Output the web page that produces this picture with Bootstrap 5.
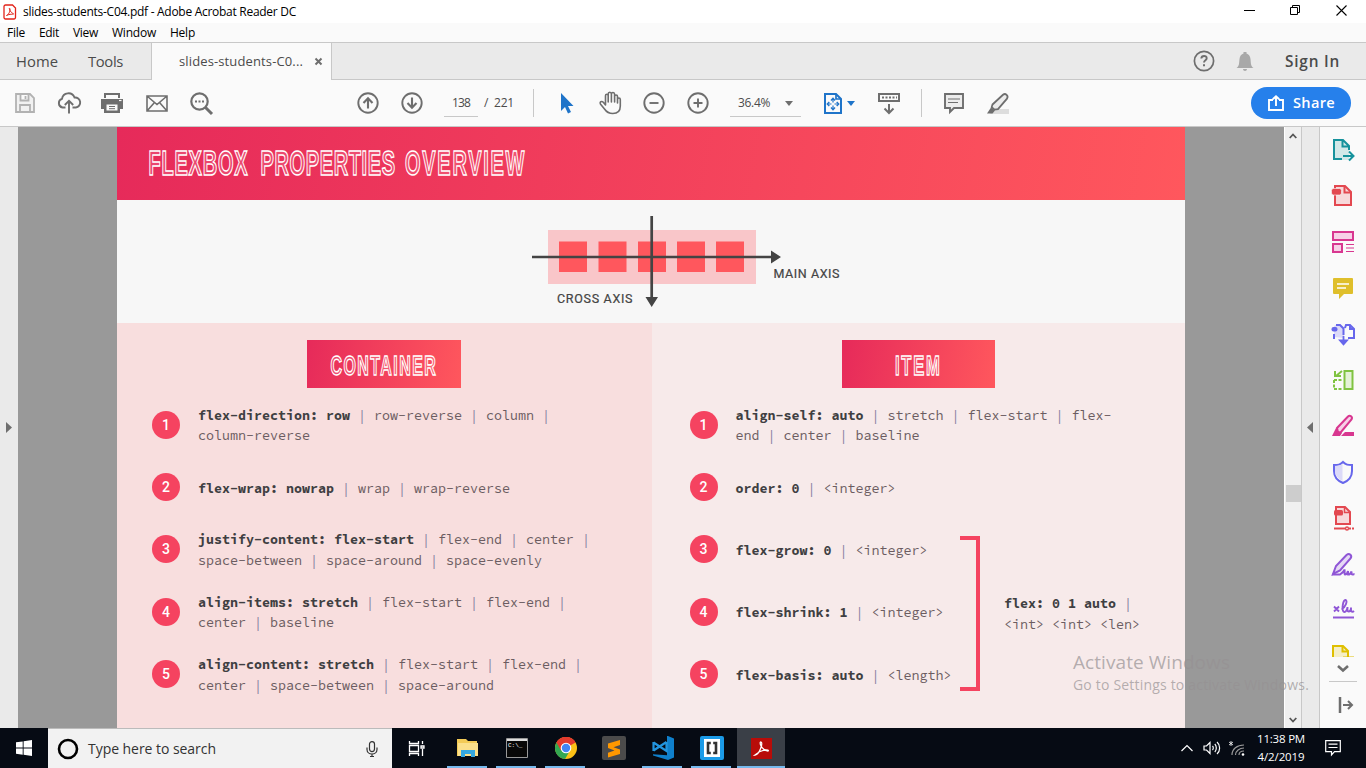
<!DOCTYPE html>
<html lang="en">
<head>
<meta charset="utf-8">
<title>slides-students-C04.pdf - Adobe Acrobat Reader DC</title>
<link href="https://cdn.jsdelivr.net/npm/bootstrap@5.3.0/dist/css/bootstrap.min.css" rel="stylesheet">
<style>
body{width:1366px;height:768px;overflow:hidden;font:12px/1.2 "Open Sans","Noto Sans",sans-serif;color:#000;background:#fafafa}
svg{display:block;flex:none;overflow:visible}
[data-w]{display:inline-block;white-space:nowrap;flex:none}
.titlebar{height:23px;background:#fff;padding-top:1px}
.titlebar .wm{gap:35px;padding-right:19px;margin-top:-3px}
.menubar{height:20px;border-bottom:1px solid #c8c8c8;font-size:12px;padding-top:1px}
.tabbar{height:37px;background:#eaeaea;border-bottom:1px solid #c8c8c8;font-size:14.8px;color:#4b4b4b}
.tabbar [data-w]{padding-top:2px}
.doc-tab{width:181px;height:37px;background:#fafafa;border:solid #c8c8c8;border-width:0 1px;font-size:13px}
.toolbar{height:47px;border-bottom:1px solid #c8c8c8;color:#6e6e6e;padding-left:3px}
.cell{width:44px;flex:none;display:flex;justify-content:center;align-items:center}
.vline{width:1px;height:28px;background:#c8c8c8;flex:none}
.field{height:27px;border-bottom:1px solid #c8c8c8;color:#4b4b4b;flex:none}
.share{width:100px;height:32px;border-radius:16px;background:#2680eb;font-size:14.6px;font-weight:600;color:#fff;border:0;padding:0 0 0 17px}
.work{height:601px}
.strip{background:#eaeaea;flex:none}
.canvas{background:#999;width:1266px}
.slide{width:1068px}
.slide-head{height:73px;background:linear-gradient(100deg,#e62a5a,#ff575d)}
.inline-caps{fill:#fff;fill-opacity:.12;stroke:#fff;stroke-width:1.5;font-family:"Liberation Sans",sans-serif;font-weight:700}
.axes{height:123px;background:#f7f7f7}
.pane{padding-top:17px}
.pane.one{width:535px;background:#f8dede}
.pane.two{width:533px;background:#f7eaea}
.pill{width:154px;height:48px;background:linear-gradient(100deg,#e62a5a,#ff575d)}
.prop{height:62.4px;display:flex;align-items:center}
.num{width:28px;height:28px;border-radius:50%;background:#f54360;color:#fff;font:500 14px/29px Roboto,sans-serif;text-align:center;flex:none;margin:-1px 18px 0 0}
.code{font:13.34px/20.6px "Source Code Pro","Liberation Mono",monospace;color:#6b5c61;white-space:nowrap;padding-top:2px}
.code.solo{padding-top:4px}
.code b{color:#3f3f42;font-weight:700}
.pane i{color:#8d87a3;font-style:normal}
.brace{width:20px;height:155px;border:4px solid #f54360;border-left:0}
.scroller{width:17px;background:#f0f0f0;border-left:1px solid #fff;flex:none}
.tools{background:#fafafa;width:46px;border-left:1px solid #c8c8c8}
.tools .list{height:530px;overflow:hidden}
.tools .list svg{height:46px;width:46px}
.mark-os{left:1073px;top:651px;color:rgba(150,145,147,.7);z-index:5}
.taskbar{height:40px;background:#060b14;color:#fff}
.search{width:344px;height:40px;background:#f2f2f2;color:#333;border-top:1px solid #bbb;font-size:14px}
.app{width:49px;height:40px;display:flex;justify-content:center;align-items:center;flex:none;position:relative}
.app.run::after{content:"";position:absolute;bottom:0;left:4px;width:40px;height:2px;background:#76b9ed}
.app.on{background:#3a3f47;width:48px}
.app.on::after{left:0;width:48px}
</style>
</head>
<body>
<header>
<div class="titlebar d-flex align-items-center">
<svg width="14" height="16" style="margin-left:3px" viewBox="0 0 14 16"><path d="M2.500 1h7L12.500 4v9.500a1.500 1.500 0 0 1-1.500 1.500H2.500A1.500 1.500 0 0 1 1 13.500v-11A1.500 1.500 0 0 1 2.500 1z" fill="#fff" stroke="#e2231a" stroke-width="1.300"/><path d="M3.500 11.500c2.500-1 4.300-5.500 3.300-7s-.8 3 3.700 5.300c.8.900-3.500-.3-7 1.700z" fill="none" stroke="#e2231a"/></svg>
<span data-w="273" style="margin-left:6px">slides-students-C04.pdf - Adobe Acrobat Reader DC</span>
<div class="wm d-flex align-items-center ms-auto">
<svg width="11" height="11" stroke="#000"><path d="M0 5.500h11"/></svg>
<svg width="11" height="11" fill="none" stroke="#000"><path d="M.5 2.500h7v7h-7zM2.500 2V.5h7v7H8"/></svg>
<svg width="11" height="11" stroke="#000" stroke-width="1.100"><path d="M.5.5l10 10M10.500.5l-10 10"/></svg>
</div>
</div>
<nav class="menubar d-flex align-items-center" style="padding-left:7px"><span data-w="18">File</span><span data-w="20" style="margin-left:14px">Edit</span><span data-w="25" style="margin-left:14px">View</span><span data-w="44" style="margin-left:14px">Window</span><span data-w="25" style="margin-left:14px">Help</span></nav>
<div class="tabbar d-flex align-items-center">
<span data-w="42" style="margin-left:16px">Home</span><span data-w="35" style="margin-left:30px">Tools</span>
<div class="doc-tab d-flex align-items-center" style="margin-left:28px"><span data-w="124" style="margin-left:27px">slides-students-C0...</span><svg width="7" height="7" style="margin-left:12px" stroke="#6e6e6e" stroke-width="2"><path d="M.5.5l6 6M6.500.5l-6 6"/></svg></div>
<div class="d-flex align-items-center ms-auto" style="padding-right:26px">
<svg width="22" height="22" viewBox="0 0 22 22" fill="none" stroke="#6e6e6e"><circle cx="11" cy="11" r="9.600" stroke-width="1.700"/><path d="M8.300 8.500c.3-3.500 5.500-3.200 5.400-.2 0 2-2.700 2-2.700 4.300" stroke-width="1.900"/><path d="M11 14.200v2" stroke-width="2"/></svg>
<svg width="18" height="20" style="margin-left:21px" viewBox="0 0 18 20" fill="#a8a8a8"><path d="M.5 17c3-2 2.500-5 3-9 .3-3 2-5 4-5.500V1h3v1.500c2 .5 3.700 2.500 4 5.500.5 4 0 7 3 9zM7 18h4c0 2.500-4 2.500-4 0z"/></svg>
<span data-w="55" style="margin-left:31px;font-weight:600;font-size:15.4px">Sign In</span>
</div>
</div>
<div class="toolbar d-flex align-items-center">
<div class="cell"><svg width="20" height="20" fill="#f1f1f1" stroke="#b2b2b2" stroke-width="1.800"><path d="M1 1h14l4 4v14H1zM5.500 1v6.500h8V1M5 19v-7h10v7"/><path d="M10.500 3v3"/></svg></div>
<div class="cell"><svg width="24" height="22" viewBox="0 0 24 22" fill="none" stroke="#6e6e6e" stroke-width="1.900"><path d="M8.500 15.500H5.500A4.500 4.500 0 0 1 5 6.800 6.500 6.500 0 0 1 17.500 5.500a5 5 0 0 1 1.300 10h-3.300M12 21.500V9M7.800 13L12 8.800 16.200 13"/></svg></div>
<div class="cell" style="margin-left:-1px;margin-right:1px"><svg width="22" height="20" viewBox="0 0 22 20"><path fill="#6e6e6e" d="M3 0h16v5H3zM0 6h22v10h-3v4H3v-4H0z"/><path d="M5.500 11.500h11v6h-11z" fill="#fafafa"/><path d="M5 2h12v3H5z" fill="#fafafa"/><path d="M8 13.500h6M8 15.700h6" stroke="#6e6e6e"/><path d="M18 7.500h2.500" stroke="#fafafa" stroke-width="1.200"/></svg></div>
<div class="cell"><svg width="22" height="17" fill="none" stroke="#6e6e6e" stroke-width="1.600"><path d="M1 1h20v15H1zM1 1l10 8.500L21 1M1 16l7.500-8.500M21 16l-7.500-8.500"/></svg></div>
<div class="cell"><svg width="23" height="23" fill="none" stroke="#6e6e6e"><circle cx="9.500" cy="9.500" r="8.200" stroke-width="2.200"/><path d="M15.500 15.500l6.500 6.500" stroke-width="3"/><path d="M5 9.500h9" stroke-width="2" stroke-dasharray="2 1.500"/></svg></div>
<div class="cell" style="margin-left:123px"><svg width="22" height="22" fill="none" stroke="#6e6e6e" stroke-width="1.900"><circle cx="11" cy="11" r="9.700"/><path d="M11 16.500V6.500M6.500 11L11 6.300l4.500 4.700" stroke-width="2.100"/></svg></div>
<div class="cell"><svg width="22" height="22" fill="none" stroke="#6e6e6e" stroke-width="1.900"><circle cx="11" cy="11" r="9.700"/><path d="M11 5.500v10M6.500 11l4.500 4.700 4.500-4.700" stroke-width="2.100"/></svg></div>
<div class="field d-flex align-items-center" style="margin-left:10px;width:34px;padding:1px 0 0 8px"><span data-w="18">138</span></div>
<span data-w="30" style="margin-left:6px;color:#4b4b4b;padding-top:1px">/&nbsp; 221</span>
<div class="vline" style="margin-left:19px"></div>
<div class="cell" style="margin-left:11px"><svg width="14" height="21"><path d="M1 0v18l4-4 3 6.500 3-1.500-3-6h5.500z" fill="#1f74c9"/></svg></div>
<div class="cell" style="margin-left:-1px"><svg width="23" height="24" viewBox="0 0 23 24" fill="none" stroke="#6e6e6e" stroke-width="1.600" stroke-linecap="round" stroke-linejoin="round"><path d="M6.500 14V4.800c0-2 2.700-2 2.700 0V11 3c0-2.300 3.200-2.300 3.200 0v8V3c0-2.200 3.200-2 3.200.2V11 5.500c0-2 2.900-2 2.900 0V12 8.500c0-2 2.800-2 2.800 0V15c0 5-3 7.500-7.500 7.500S7.500 21 5.500 18L1.600 13.200c-1.500-2.300 1.100-3.500 2.700-1.900z"/></svg></div>
<div class="cell"><svg width="22" height="22" fill="none" stroke="#6e6e6e" stroke-width="1.900"><circle cx="11" cy="11" r="9.700"/><path d="M6.500 11h9"/></svg></div>
<div class="cell"><svg width="22" height="22" fill="none" stroke="#6e6e6e" stroke-width="1.900"><circle cx="11" cy="11" r="9.700"/><path d="M6.500 11h9M11 6.500v9"/></svg></div>
<div class="field d-flex align-items-center" style="margin-left:10px;width:71px;padding:1px 0 0 8px"><span data-w="32">36.4%</span><svg width="8" height="5" style="margin-left:15px"><path d="M0 0h8L4 5z" fill="#6e6e6e"/></svg></div>
<svg width="18" height="21" style="margin-left:23px" fill="none" stroke="#1f74c9"><path d="M1 1h11l5 5v14H1z" stroke-width="2"/><path d="M12 1v5h5" stroke-width="1.700"/><path d="M9 6v3.500M9 12.500V16M4 11h3.500M10.500 11H14" stroke-width="1.200"/><path d="M7 7.500L9 5.300l2 2.200M7 14.500l2 2.200 2-2.200M5.300 9L3.300 11l2 2M12.700 9l2 2-2 2" stroke-width="1.400"/></svg>
<svg width="8" height="5" style="margin-left:5px"><path d="M0 0h8L4 5z" fill="#1f74c9"/></svg>
<svg width="22" height="21" style="margin-left:23px" fill="none" stroke="#6e6e6e" stroke-width="2"><path d="M1 1h20v7H1z"/><path d="M4 4.500h15" stroke-width="1.800" stroke-dasharray="2 1.500"/><path d="M11 11v9M6.500 15.500L11 20l4.500-4.500"/></svg>
<div class="vline" style="margin-left:21px"></div>
<div class="cell" style="margin-left:10px"><svg width="20" height="21" fill="#ececec" stroke="#6e6e6e" stroke-width="1.900"><path d="M1 1h18v14h-9l-4 4v-4H1z"/><path d="M4 6h12M4 9.500h10" stroke-width="1.200"/></svg></div>
<div class="cell" style="margin-left:-1px"><svg width="23" height="21"><path d="M7 16h16v5H4z" fill="#ddd"/><path d="M6.500 11.500L17 1.800c2.500-2 5.800.8 4 3.800l-9 10.500-3.500.5-2.800-2.500z" fill="#ececec" stroke="#6e6e6e" stroke-width="1.800"/><path d="M1 20.500l4-6 4 3-2.500 3z" fill="#6e6e6e"/></svg></div>
<button class="share d-flex align-items-center ms-auto" style="margin-right:15px"><svg width="16" height="16" fill="none" stroke="#fff" stroke-width="1.900"><path d="M5 5H1v10h14V5h-4M8 11V1.500M4.800 4.300L8 1.200l3.200 3.100"/></svg><span data-w="42" style="margin-left:9px">Share</span></button>
</div>
</header>

<main class="work d-flex">
<div class="strip d-flex align-items-center" style="width:18px"><svg width="6" height="11" style="margin-left:6px"><path d="M0 0v11l6-5.500z" fill="#6e6e6e"/></svg></div>
<div class="canvas d-flex justify-content-center">
<div class="slide d-flex flex-column">
<div class="slide-head">
<svg width="1068" height="73" viewBox="117 127 1068 73" class="inline-caps" font-size="34.500"><text transform="translate(148.500 174.500) scale(.58 1)" textLength="171">FLEXBOX</text><text transform="translate(260.500 174.500) scale(.58 1)" textLength="232">PROPERTIES</text><text transform="translate(405 174.500) scale(.58 1)" textLength="206">OVERVIEW</text></svg>
</div>
<div class="axes">
<svg width="1068" height="123" viewBox="117 200 1068 123"><path fill="#f9c6c9" d="M548 230h208v54H548z"/><path fill="#ff575d" d="M559 241.500h28v30.500h-28zM598.500 241.500h28v30.500h-28zM638 241.500h28v30.500h-28zM677 241.500h28v30.500h-28zM716 241.500h28v30.500h-28z"/><path d="M532 257h240M651.700 216v82" stroke="#444" stroke-width="2.700"/><path d="M771 250.500v13l10-6.500zM645.500 297h12.500l-6.300 10z" fill="#444"/><g font-family="Roboto" font-size="12.500" fill="#444" stroke="#444" stroke-width=".2"><text x="773.500" y="278" textLength="66">MAIN AXIS</text><text x="557" y="303" textLength="75.500">CROSS AXIS</text></g></svg>
</div>
<div class="d-flex flex-grow-1">
<section class="pane one">
<div class="pill" style="margin-left:190px"><svg width="154" height="48" class="inline-caps" font-size="28.500"><text transform="translate(23.500 35) scale(.56 1)" textLength="188">CONTAINER</text></svg></div>
<div style="padding:6px 0 0 35px">
<div class="prop"><span class="num">1</span><div class="code"><b>flex-direction: row</b> <i>|</i> row-reverse <i>|</i> column <i>|</i><br>column-reverse</div></div>
<div class="prop"><span class="num">2</span><div class="code solo"><b>flex-wrap: nowrap</b> <i>|</i> wrap <i>|</i> wrap-reverse</div></div>
<div class="prop"><span class="num">3</span><div class="code"><b>justify-content: flex-start</b> <i>|</i> flex-end <i>|</i> center <i>|</i><br>space-between <i>|</i> space-around <i>|</i> space-evenly</div></div>
<div class="prop"><span class="num">4</span><div class="code"><b>align-items: stretch</b> <i>|</i> flex-start <i>|</i> flex-end <i>|</i><br>center <i>|</i> baseline</div></div>
<div class="prop"><span class="num">5</span><div class="code"><b>align-content: stretch</b> <i>|</i> flex-start <i>|</i> flex-end <i>|</i><br>center <i>|</i> space-between <i>|</i> space-around</div></div>
</div>
</section>
<section class="pane two">
<div class="pill" style="margin-left:190px;width:153px"><svg width="153" height="48" class="inline-caps" font-size="28.500"><text transform="translate(53 35) scale(.58 1)" textLength="77">ITEM</text></svg></div>
<div style="padding:6px 0 0 37.5px">
<div class="prop"><span class="num">1</span><div class="code"><b>align-self: auto</b> <i>|</i> stretch <i>|</i> flex-start <i>|</i> flex-<br>end <i>|</i> center <i>|</i> baseline</div></div>
<div class="prop"><span class="num">2</span><div class="code solo"><b>order: 0</b> <i>|</i> &lt;integer&gt;</div></div>
<div class="d-flex align-items-center">
<div style="width:270px">
<div class="prop"><span class="num">3</span><div class="code"><b>flex-grow: 0</b> <i>|</i> &lt;integer&gt;</div></div>
<div class="prop"><span class="num">4</span><div class="code"><b>flex-shrink: 1</b> <i>|</i> &lt;integer&gt;</div></div>
<div class="prop"><span class="num">5</span><div class="code solo"><b>flex-basis: auto</b> <i>|</i> &lt;length&gt;</div></div>
</div>
<div class="brace" style="margin-top:2.600px"></div>
<div class="code" style="margin-left:24.5px;padding-top:5px"><b>flex: 0 1 auto</b> <i>|</i><br>&lt;int&gt; &lt;int&gt; &lt;len&gt;</div>
</div>
</div>
</section>
</div>
</div>
</div>
<div class="scroller d-flex flex-column align-items-center"><svg width="8" height="6" style="margin-top:6px" fill="none" stroke="#555" stroke-width="1.800"><path d="M.7 5L4 1.500 7.300 5"/></svg><div style="width:15px;height:17px;background:#cdcdcd;margin-top:346px"></div><svg width="8" height="6" style="margin:auto 0 5px" fill="none" stroke="#555" stroke-width="1.800"><path d="M.7 1L4 4.500 7.300 1"/></svg></div>
<div class="strip d-flex align-items-center justify-content-center" style="width:18px;border-left:1px solid #c8c8c8"><svg width="6" height="11" style="margin-right:1px"><path d="M6 0v11L0 5.500z" fill="#6e6e6e"/></svg></div>
<aside class="tools flex-grow-1">
<div class="list d-flex flex-column">
<svg viewBox="0 0 46 46"><path d="M14 13h9l6 6v14H14z" fill="#d2e8e8"/><path d="M22 32H14V13h9l6 6v4M22.500 13v6.500H29" fill="none" stroke="#16929c" stroke-width="2"/><path d="M23 29h10M29 24.500l4.500 4.500-4.500 4.500" stroke="#16929c" fill="none" stroke-width="2"/></svg>
<svg viewBox="0 0 46 46"><path d="M15 32V13h10l6 6v13z" fill="#f7d8da" stroke="#e34850" stroke-width="2"/><path d="M24.500 13v6.500H31" stroke="#e34850" fill="none" stroke-width="2"/><rect x="11.500" y="15.500" width="10" height="6.500" rx="2" fill="#e34850" stroke="#fafafa" stroke-width=".6"/></svg>
<svg viewBox="0 0 46 46" fill="#f7d0e7" stroke="#d83790" stroke-width="2"><path d="M13 13h20v8H13zM13 25h9v8h-9z"/><path d="M26 25.500h8M26 29h8M26 32.500h8" stroke-width="1.200"/></svg>
<svg viewBox="0 0 46 46"><path d="M14 13h18q1 0 1 1v14q0 1-1 1h-8l-5 5v-5h-5q-1 0-1-1V14q0-1 1-1z" fill="#dfbf2b"/><path d="M17 19h12M17 23h9" stroke="#fff" stroke-width="1.700"/></svg>
<svg viewBox="0 0 46 46"><path d="M14 26V15l2-1h5l3 4v9z" fill="#dcdaf8"/><path d="M15 27h-1v-4M16 14h4l3.500 3.500V24M25 17l1-3h4l4 4v9h-6M30 14v4h4" stroke="#6767ec" stroke-width="2" fill="none"/><rect x="11.500" y="16" width="6" height="4.500" rx="2" fill="#6767ec"/><path d="M23.500 25v5M20 29.500h7l-3.500 4z" fill="#6767ec" stroke="#6767ec" stroke-width="1.800"/></svg>
<svg viewBox="0 0 46 46" fill="none" stroke="#80c342" stroke-width="2"><path d="M24.500 14h8v18h-8z" fill="#e4f2d8"/><path d="M14 23v9h9M14 23h9" stroke-dasharray="3 1.500"/><path d="M22 14l-6 5M15 14v5h6"/></svg>
<svg viewBox="0 0 46 46"><path d="M12 33l4-8 6 5-2 3z" fill="#d83790"/><path d="M17 25L28 13.500c2-2 5 .5 3.500 3L21 29l-3 .5z" fill="#f7d0e7" stroke="#d83790" stroke-width="2"/><path d="M21 33l4-4h9v4z" fill="#d83790"/></svg>
<svg viewBox="0 0 46 46"><path d="M23 13c3 3 5 3 9 3v6c0 6-4 10-9 12-5-2-9-6-9-12v-6c4 0 6 0 9-3z" fill="#fafafa" stroke="#6767ec" stroke-width="2"/><path d="M22.500 15v17c-4-2-7.500-6-7.500-10v-5c3 0 5-.5 7.500-2z" fill="#dcdaf8"/></svg>
<svg viewBox="0 0 46 46"><path d="M16 29V12h9l5 5v12z" fill="#f7d8da" stroke="#e34850" stroke-width="2"/><path d="M24.500 12v5.500H30" stroke="#e34850" fill="none" stroke-width="1.500"/><rect x="14" y="15" width="9" height="5.500" rx="1.500" fill="#e34850"/><path d="M14 33.500h11M29 33.500h2M32 33.500h2" stroke="#e34850" stroke-width="1.800"/><circle cx="27" cy="33.500" r="1.500" fill="none" stroke="#e34850" stroke-width="1.400"/></svg>
<svg viewBox="0 0 46 46" fill="none" stroke="#8f56d6" stroke-width="2"><path d="M13 33l3-8 10.500-11c3-2.500 6 .5 4 3.500L20 29.500z" fill="#e6d9f5"/><path d="M12 33.500h8c3-2 4-3 4.500-5 .5 3-.5 4.500.5 5 2 0 2.500-1.500 3-3.500v3.500c1.500.5 2.500-1 3.500-3v2.500c1 1 2 0 3 .5"/></svg>
<svg viewBox="0 0 46 46" fill="none" stroke="#8f56d6" stroke-width="1.900"><path d="M14 19.500l5 5M19 19.500l-5 5M21.500 22.500c4-2 6.500-9 4-9.500s-4 9.500-2 11.500 4-2.500 4-4.500c0 2-.5 4.500 1 4.500 1.500 0 2.500-2 2.500-4v3c0 1.500 2 1.500 3 .5M13 30.500h21"/></svg>
<svg viewBox="0 0 46 46" fill="none" stroke="#dfbf00" stroke-width="2"><path d="M13 34V13h10l5 5v7h-5l-3 3v3z" fill="#f5efc6"/><path d="M22.500 13v5.500H28M23 24.500h11"/></svg>
</div>
<svg width="46" height="8" style="margin-top:8px" fill="none" stroke="#6e6e6e" stroke-width="2.600"><path d="M18 1l5 4.500L28 1"/></svg>
<div style="width:28px;height:1px;background:#c8c8c8;margin:8px 0 0 9px"></div>
<svg width="46" height="16" style="margin-top:15px" fill="none" stroke="#6e6e6e" stroke-width="2"><path d="M20 0v16" stroke-width="2.500"/><path d="M23 8h9M28 4l4 4-4 4"/></svg>
</aside>
</main>

<footer class="taskbar d-flex align-items-center">
<svg width="16" height="16" style="margin:0 16px" fill="#fff"><path d="M0 2.300L6.700 1.400v6.200H0zM7.600 1.300L16 0v7.600H7.600zM0 8.500h6.700v6.200L0 13.800zM7.600 8.500H16V16l-8.400-1.200z"/></svg>
<div class="search d-flex align-items-center"><svg width="22" height="22" style="margin-left:9px" fill="none" stroke="#000" stroke-width="2.600"><circle cx="11" cy="11" r="9"/></svg><span data-w="128" style="margin-left:9px;padding-top:1px">Type here to search</span><svg width="12" height="16" style="margin-left:150px" fill="none" stroke="#333" stroke-width="1.200"><rect x="3.500" y=".6" width="5" height="10" rx="2.500"/><path d="M1 6.500v2c0 6 10 6 10 0v-2M6 13v3M4 15.500h4"/></svg></div>
<div class="app"><svg width="17" height="15" fill="none" stroke="#fff" stroke-width="1.300"><path d="M1.500 0v2.500h9V0M1.500 15v-2.500h9V15M1.500 4.500h9v6h-9zM14.500 0v3M14.500 8v7M13 5h3v2h-3z"/></svg></div>
<div class="app run" style="margin-left:2px"><svg width="22" height="20"><path d="M0 1h9l2 2h9v15H0z" fill="#f3cb57"/><path d="M1 5h20v13H1z" fill="#fbe08b"/><path d="M4 19v-7h14v7h-4v-3H8v3z" fill="#35a8e0"/></svg></div>
<div class="app run"><svg width="22" height="20"><path d="M.5.5h21v19H.5z" fill="#080808" stroke="#999"/><path d="M1 1h20v2H1z" fill="#ddd"/><text x="2" y="9" font-size="6" font-family="Liberation Mono" fill="#fff">C:\_</text></svg></div>
<div class="app run" style="margin-right:-1px"><svg width="22" height="22" viewBox="0 0 24 24"><circle cx="12" cy="12" r="12" fill="#fbc116"/><path d="M12 12L1.600 6A12 12 0 0 1 22.400 6z" fill="#e33b2e"/><path d="M12 12L1.600 6A12 12 0 0 0 11 24l5.500-9.500z" fill="#33a852"/><path d="M12 6h10.400A12 12 0 0 0 1.600 6l5 9z" fill="#e33b2e"/><circle cx="12" cy="12" r="5.800" fill="#fff"/><circle cx="12" cy="12" r="4.600" fill="#4285f4"/></svg></div>
<div class="app"><svg width="24" height="24"><rect width="24" height="24" rx="2" fill="#4b4b4b"/><path d="M18 4v5l-6.500 2.200L18 13.500V18L6 21.500v-4.700l6.500-2.300L6 12V7.500z" fill="#ff9800"/></svg></div>
<div class="app run"><svg width="24" height="24"><path d="M17 0l6 2.500v19L17 24 2 19.500v-1.300l14 1V0z" fill="#0f80cc"/><path d="M15.500 6L2.500 14.500M2.500 6.500l13 8.500V6M2.500 6v9" fill="none" stroke="#2295df" stroke-width="2.200"/></svg></div>
<div class="app run"><svg width="24" height="24"><rect width="24" height="24" rx="2" fill="#1b9be8"/><path d="M4 3h16v18H4z" fill="#fff"/><path d="M10.800 7H8v10h2.800M13.200 7H16v10h-2.800" fill="none" stroke="#333" stroke-width="2.600"/></svg></div>
<div class="app run on" style="margin-left:1px;margin-right:-1px"><svg width="21" height="21"><path d="M0 0h21v21H0z" fill="#b80c09"/><path d="M4 17c5-1 8-12 6-13s-.5 8 7 9c2-1-5-3-13 4z" fill="none" stroke="#fff" stroke-width="1.300"/></svg></div>
<div class="d-flex align-items-center ms-auto" style="padding-right:25px">
<svg width="12" height="8" fill="none" stroke="#fff" stroke-width="1.200"><path d="M.5 7L6 1.500 11.500 7"/></svg>
<svg width="18" height="14" style="margin-left:10px" fill="none" stroke="#fff" stroke-width="1.200"><path d="M1 5h2.500L7 1.500v11L3.500 9H1zM9.500 5c1 1 1 3 0 4M11.800 3c2 2 2 6 0 8M14 1c3.500 3 3.500 9 0 12"/></svg>
<svg width="17" height="17" style="margin-left:7px" fill="none" stroke="#999" stroke-width="1.200"><path d="M3 1v5M1 2l4 3M5 2L1 5" stroke="#fff" stroke-width=".8"/><path d="M4 15C4 9 9 5 16 5M7.500 15c0-4 4-7 8.500-7M11 15c0-2.500 2-4 5-4"/><circle cx="15" cy="14.500" r="1.300" fill="#fff" stroke="none"/></svg>
<div class="d-flex flex-column align-items-center" style="margin-left:12px;line-height:18px;width:48px;font-size:11.5px"><span data-w="48">11:38 PM</span><span data-w="47">4/2/2019</span></div>
<svg width="16" height="16" style="margin-left:20px" fill="none" stroke="#fff" stroke-width="1.200"><path d="M.7.7h14.600v11H9.500L6.500 15v-3.300H.7zM3.500 4.200h9M3.500 7.500h9"/></svg>
</div>
</footer>
<div class="mark-os position-absolute d-flex flex-column align-items-start"><span data-w="157" style="font-size:19px">Activate Windows</span><span data-w="236" style="font-size:14px;margin-top:3px">Go to Settings to activate Windows.</span></div>
<script src="https://cdn.jsdelivr.net/npm/bootstrap@5.3.0/dist/js/bootstrap.bundle.min.js"></script>
<script>
// Track each label so that it fills its declared width.
document.querySelectorAll('[data-w]').forEach(function(el){
  var w=+el.dataset.w, n=el.textContent.length;
  el.style.letterSpacing=((w-el.getBoundingClientRect().width)/n)+'px';
  el.style.width=w+'px';
});
</script>
</body>
</html>
